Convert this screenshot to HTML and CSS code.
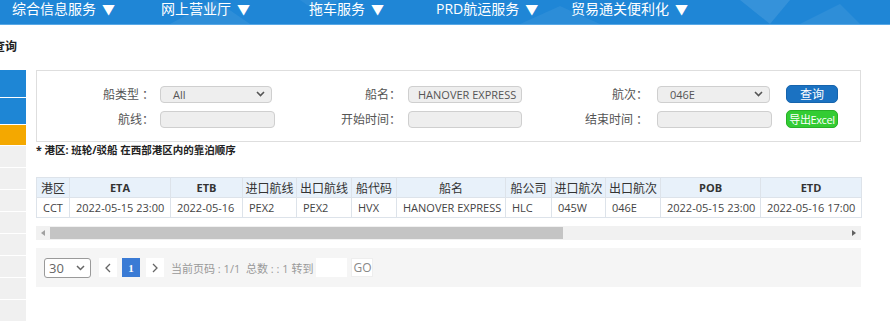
FILE: index.html
```html
<!DOCTYPE html>
<html lang="zh">
<head>
<meta charset="utf-8">
<title>查询</title>
<link rel="stylesheet" href="styles.css">
</head>
<body>
<header class="topnav">
  <svg class="deco" width="890" height="24" viewBox="0 0 890 24" aria-hidden="true">
    <polygon points="170,24 215,0 250,24" fill="#ffffff" fill-opacity="0.07"/>
    <polygon points="520,24 560,6 600,24" fill="#ffffff" fill-opacity="0.06"/>
    <polygon points="740,0 790,0 770,24" fill="#ffffff" fill-opacity="0.10"/>
    <polygon points="800,24 840,4 860,24" fill="#ffffff" fill-opacity="0.07"/>
    <polygon points="300,0 340,0 320,14" fill="#ffffff" fill-opacity="0.05"/>
  </svg>
  <ul class="menu">
    <li class="menu-item w1">综合信息服务<span class="caret">▼</span></li>
    <li class="menu-item w2">网上营业厅<span class="caret">▼</span></li>
    <li class="menu-item w3">拖车服务<span class="caret">▼</span></li>
    <li class="menu-item w4">PRD航运服务<span class="caret">▼</span></li>
    <li class="menu-item">贸易通关便利化<span class="caret">▼</span></li>
  </ul>
</header>

<div class="page-title">查询</div>

<div class="layout">
  <aside class="sidebar">
    <div class="side-item blue tall"></div>
    <div class="side-item blue"></div>
    <div class="side-item orange"></div>
    <div class="side-item grey"></div>
    <div class="side-item grey"></div>
    <div class="side-item grey"></div>
    <div class="side-item grey"></div>
    <div class="side-item grey"></div>
    <div class="side-item grey"></div>
    <div class="side-item grey"></div>
    <div class="side-item grey"></div>
  </aside>

  <main class="content">
    <div class="search-panel">
      <label class="lbl">船类型 ：</label>
      <div class="field"><span class="select w-a">All<svg class="chev" width="9" height="6" viewBox="0 0 9 6"><path d="M1 1 L4.5 4.5 L8 1" fill="none" stroke="#555" stroke-width="1.6"/></svg></span></div>
      <label class="lbl l2">船名：</label>
      <div class="field"><span class="input filled">HANOVER EXPRESS</span></div>
      <label class="lbl l3">航次：</label>
      <div class="field"><span class="select w-c">046E<svg class="chev" width="9" height="6" viewBox="0 0 9 6"><path d="M1 1 L4.5 4.5 L8 1" fill="none" stroke="#555" stroke-width="1.6"/></svg></span></div>
      <div class="field"><span class="btn btn-blue">查询</span></div>

      <label class="lbl">航线：</label>
      <div class="field"><span class="input w-b"></span></div>
      <label class="lbl l2">开始时间：</label>
      <div class="field"><span class="input"></span></div>
      <label class="lbl l3">结束时间 ：</label>
      <div class="field"><span class="input w-b"></span></div>
      <div class="field"><span class="btn btn-green">导出Excel</span></div>
    </div>

    <p class="note">* 港区: 班轮/驳船 在西部港区内的靠泊顺序</p>

    <div class="table-wrap">
      <table class="grid">
        <colgroup>
          <col style="width:33px"><col style="width:101px"><col style="width:72px"><col style="width:54px"><col style="width:55px"><col style="width:45px"><col style="width:109px"><col style="width:46px"><col style="width:54px"><col style="width:55px"><col style="width:100px"><col style="width:101px">
        </colgroup>
        <thead>
          <tr>
            <th class="cn">港区</th><th>ETA</th><th>ETB</th><th class="cn">进口航线</th><th class="cn">出口航线</th><th class="cn">船代码</th><th class="cn">船名</th><th class="cn">船公司</th><th class="cn">进口航次</th><th class="cn">出口航次</th><th>POB</th><th>ETD</th>
          </tr>
        </thead>
        <tbody>
          <tr>
            <td>CCT</td><td>2022-05-15 23:00</td><td>2022-05-16</td><td>PEX2</td><td>PEX2</td><td>HVX</td><td>HANOVER EXPRESS</td><td>HLC</td><td>045W</td><td>046E</td><td>2022-05-15 23:00</td><td>2022-05-16 17:00</td>
          </tr>
        </tbody>
      </table>
      <div class="hscroll">
        <span class="arrow">
          <svg width="4" height="6" viewBox="0 0 4 6"><path d="M4 0 L0 3 L4 6 Z" fill="#a0a0a0"/></svg>
        </span>
        <span class="track"><span class="thumb"></span></span>
        <span class="arrow">
          <svg width="4" height="6" viewBox="0 0 4 6"><path d="M0 0 L4 3 L0 6 Z" fill="#606060"/></svg>
        </span>
      </div>
    </div>

    <div class="pager">
      <span class="page-size">30<svg class="chev2" width="9" height="6" viewBox="0 0 9 6"><path d="M1 1 L4.5 4.5 L8 1" fill="none" stroke="#666" stroke-width="1.5"/></svg></span>
      <span class="pbtn">
        <svg width="6" height="10" viewBox="0 0 6 10"><path d="M5 1 L1 5 L5 9" fill="none" stroke="#666" stroke-width="1.3"/></svg>
      </span>
      <span class="pbtn current">1</span>
      <span class="pbtn">
        <svg width="6" height="10" viewBox="0 0 6 10"><path d="M1 1 L5 5 L1 9" fill="none" stroke="#666" stroke-width="1.3"/></svg>
      </span>
      <span class="pinfo">当前页码 : 1/1&nbsp; 总数 : : 1 转到</span>
      <span class="pjump"></span>
      <span class="pgo">GO</span>
    </div>
  </main>
</div>
</body>
</html>
```

FILE: styles.css
```css
* { box-sizing: border-box; }

html, body {
  margin: 0;
  padding: 0;
  background: #ffffff;
  font-family: "Open Sans", "Noto Sans CJK SC", sans-serif;
  font-size: 12px;
  color: #333;
  overflow: hidden;
}

/* ---------- top navigation ---------- */
.topnav {
  position: relative;
  height: 25px;
  background: #1f86d6;
  border-bottom: 1px solid #58a8e6;
  overflow: hidden;
}
.deco {
  position: absolute;
  left: 0;
  top: 0;
}
.menu {
  position: relative;
  list-style: none;
  margin: 0;
  padding: 0 0 0 12px;
  display: flex;
}
.menu-item {
  color: #ffffff;
  font-size: 14px;
  line-height: 18px;
  white-space: nowrap;
}
.caret {
  margin-left: 6px;
  font-size: 13px;
}
.w1 { width: 149px; }
.w2 { width: 148px; }
.w3 { width: 127px; }
.w4 { width: 135px; }

/* ---------- title ---------- */
.page-title {
  margin: 14px 0 15px -7px;
  font-size: 12px;
  line-height: 16px;
  font-weight: bold;
  color: #222;
}

/* ---------- layout ---------- */
.layout {
  display: flex;
}
.sidebar {
  width: 26px;
  flex: none;
  display: flex;
  flex-direction: column;
}
.side-item {
  height: 22px;
  border-bottom: 1px solid #ffffff;
}
.side-item.blue { background: #1e86d5; height: 27px; }
.side-item.tall { height: 28px; }
.side-item.orange { background: #f4a800; height: 21px; }
.side-item.grey { background: #f0f0f0; }

.content {
  margin-left: 10px;
  width: 825px;
  flex: none;
}

/* ---------- search panel ---------- */
.search-panel {
  border: 1px solid #dedede;
  background: #fff;
  padding: 13px 0 12px;
  display: grid;
  grid-template-columns: 123px 125px 123px 127px 122px 129px 52px;
  grid-auto-rows: 20px;
  row-gap: 5px;
  align-items: center;
}
.lbl {
  text-align: right;
  color: #555;
  font-size: 12px;
  padding-right: 6px;
  white-space: nowrap;
}
.lbl.l2 { padding-right: 7px; }
.lbl.l3 { padding-right: 9px; }
.field {
  display: flex;
  align-items: center;
}
.select, .input {
  display: flex;
  align-items: center;
  height: 17px;
  background: #eeeeee;
  border: 1px solid #cfcfcf;
  border-radius: 4px;
  color: #555;
  font-size: 11px;
  padding-left: 12px;
  white-space: nowrap;
  overflow: hidden;
}
.select {
  justify-content: space-between;
  padding-right: 6px;
}
.w-a { width: 112px; }
.w-c { width: 113px; }
.input { width: 114px; padding-left: 9px; }
.input.w-b { width: 115px; }
.chev { flex: none; }

.btn {
  display: flex;
  align-items: center;
  justify-content: center;
  width: 52px;
  height: 18px;
  border-radius: 5px;
  color: #fff;
  font-size: 12px;
  white-space: nowrap;
}
.btn-blue {
  background: #1b72c2;
  border: 1px solid #1664ad;
}
.btn-green {
  background: #33cc33;
  border: 1px solid #27b027;
  font-size: 11px;
  letter-spacing: -0.4px;
}

/* ---------- note ---------- */
.note {
  margin: 1px 0 20px;
  font-size: 10.5px;
  line-height: 14px;
  font-weight: bold;
  color: #222;
}

/* ---------- table ---------- */
.grid {
  border-collapse: collapse;
  table-layout: fixed;
  width: 825px;
  font-size: 11px;
  color: #444;
}
.grid th, .grid td {
  border: 1px solid #dde3ea;
  height: 20px;
  padding: 0 5px;
  white-space: nowrap;
  overflow: hidden;
}
.grid th {
  background: #e8f1fa;
  font-weight: bold;
  text-align: center;
  color: #333;
  font-size: 11px;
}
.grid th.cn {
  font-weight: normal;
  font-size: 12px;
  padding: 0 2px;
  color: #333;
}
.grid td {
  text-align: left;
  padding-left: 6px;
}

.hscroll {
  margin-top: 8px;
  height: 14px;
  background: #f1f1f1;
  display: flex;
  align-items: center;
}
.arrow {
  width: 14px;
  height: 14px;
  display: flex;
  align-items: center;
  justify-content: center;
  flex: none;
}
.track {
  flex: 1;
  height: 14px;
  display: flex;
  align-items: center;
}
.thumb {
  display: block;
  width: 513px;
  height: 12px;
  background: #c4c4c4;
}

/* ---------- pager ---------- */
.pager {
  margin-top: 8px;
  height: 39px;
  background: #f5f5f5;
  display: flex;
  align-items: center;
  padding-left: 8px;
}
.page-size {
  display: flex;
  align-items: center;
  justify-content: space-between;
  width: 47px;
  height: 20px;
  border: 1px solid #9a9a9a;
  border-radius: 3px;
  background: #fff;
  color: #666;
  font-size: 13px;
  padding: 0 5px 0 4px;
  margin-right: 8px;
}
.pbtn {
  display: flex;
  align-items: center;
  justify-content: center;
  width: 18px;
  height: 19px;
  background: #fff;
  margin-right: 6px;
}
.pbtn.current {
  background: #3a7bd5;
  color: #fff;
  font-family: "Liberation Serif", serif;
  font-weight: bold;
  font-size: 11px;
  margin-left: -1px;
}
.pinfo {
  color: #999;
  font-size: 11px;
  margin-left: 1px;
  white-space: nowrap;
}
.pjump {
  width: 31px;
  height: 19px;
  background: #fff;
  margin-left: 3px;
}
.pgo {
  width: 22px;
  height: 19px;
  background: #fff;
  border: 1px solid #eeeeee;
  margin-left: 4px;
  color: #888;
  font-size: 12px;
  display: flex;
  align-items: center;
  justify-content: center;
}
```
